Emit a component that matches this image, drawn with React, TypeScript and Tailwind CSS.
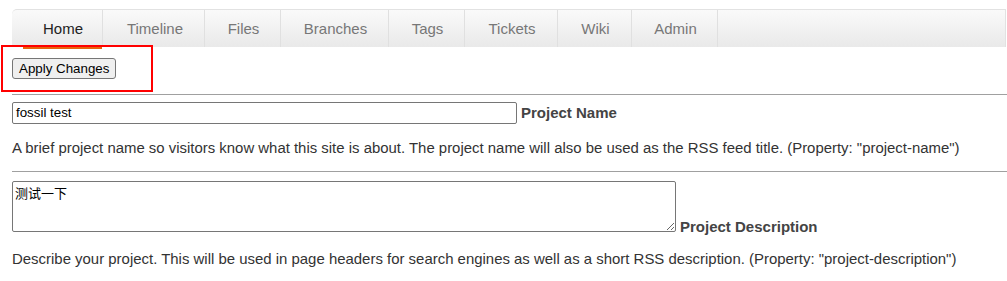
import React from "react";

const tabs: { label: string; w: string; active?: boolean }[] = [
  { label: "Home", w: "w-[91px] pl-[12px]", active: true },
  { label: "Timeline", w: "w-[102px] pl-[3px]" },
  { label: "Files", w: "w-[76px] pl-[2px]" },
  { label: "Branches", w: "w-[108px] pl-[2px]" },
  { label: "Tags", w: "w-[76px] pl-[2px]" },
  { label: "Tickets", w: "w-[93px] pl-[2px]" },
  { label: "Wiki", w: "w-[74px] pl-[2px]" },
  { label: "Admin", w: "w-[86px] pl-[2px]" },
];

export default function App() {
  return (
    <div
      className="relative w-[1007px] h-[281px] bg-white overflow-hidden"
      style={{ fontFamily: '"Liberation Sans", Arial, sans-serif' }}
    >
      <div className="pt-[9px] pl-[12px] pr-[1px]">
        <div className="flex h-[38px] border-t border-r border-[#e2e2e2] rounded-tl-[5px] bg-gradient-to-b from-[#fafafa] to-[#e9e9e9]">
          {tabs.map((t) => (
            <div
              key={t.label}
              className={`relative flex items-center justify-center pt-[1px] border-r border-[#e0e0e0] text-[15px] ${t.w} ${
                t.active ? "text-[#222]" : "text-[#777]"
              }`}
            >
              {t.label}
              {t.active && (
                <div className="absolute left-[11px] right-0 bottom-[-2px] h-[2px] bg-[#e8630a]" />
              )}
            </div>
          ))}
        </div>
      </div>

      <div className="pl-[12px]">
        <div className="pt-[9px]">
          <button className="h-[21px] px-[6px] border border-[#767676] rounded-[3px] bg-[#efefef] text-[13.33px] text-black leading-none">
            Apply Changes
          </button>
        </div>

        <div className="mt-[14px] h-[1px] bg-[#a0a0a0]" />

        <div className="mt-[7px] flex items-center h-[22px]">
          <div className="w-[505px] h-[22px] border border-[#767676] rounded-[2px] px-[3px] flex items-center text-[13.33px] text-black">
            fossil test
          </div>
          <span className="ml-[4px] text-[15px] font-bold text-[#444]">Project Name</span>
        </div>

        <p className="mt-[15px] text-[14.93px] leading-[17px] text-[#333]">
          A brief project name so visitors know what this site is about. The project name will also be used as the RSS feed title. (Property: "project-name")
        </p>

        <div className="mt-[15px] h-[1px] bg-[#a0a0a0]" />

        <div className="mt-[9px] flex items-end">
          <textarea
            readOnly
            defaultValue="测试一下"
            className="block w-[664px] h-[51px] border border-[#767676] rounded-[2px] px-[2px] pt-[4px] pb-[2px] text-[13px] leading-[16px] text-black outline-none"
            style={{ fontFamily: '"Liberation Sans", "Noto Sans CJK SC", sans-serif' }}
          />
          <span className="ml-[4px] text-[15px] leading-[17px] font-bold text-[#444] mb-[-3px]">
            Project Description
          </span>
        </div>

        <p className="mt-[18px] text-[14.95px] leading-[17px] text-[#333]">
          Describe your project. This will be used in page headers for search engines as well as a short RSS description. (Property: "project-description")
        </p>
      </div>

      <div className="absolute left-[1px] top-[45px] w-[152px] h-[47px] border-2 border-[#ff0000]" />
    </div>
  );
}
